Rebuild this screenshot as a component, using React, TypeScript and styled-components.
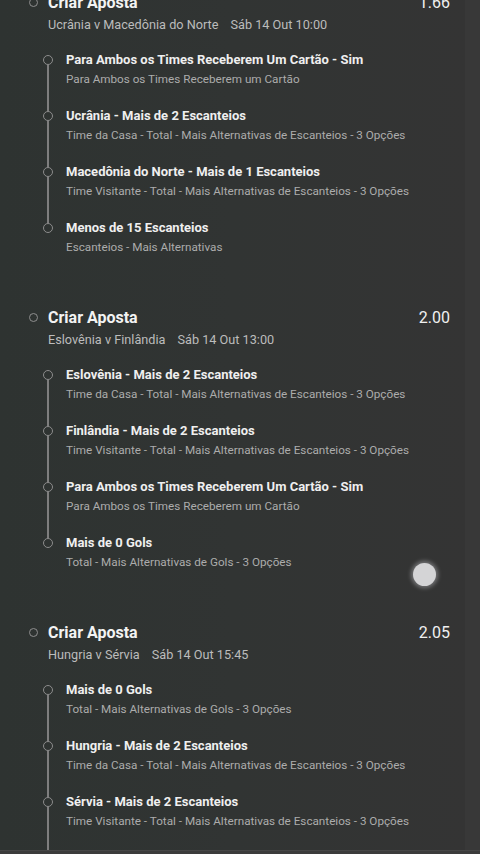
import styled, { createGlobalStyle } from 'styled-components';

const GlobalStyle = createGlobalStyle`
  html, body {
    margin: 0;
    padding: 0;
    background: #333534;
    font-family: Roboto, "Noto Sans", "Liberation Sans", sans-serif;
    overflow: hidden;
  }
`;

interface LegType {
    title: string,
    detail: string,
}

interface BetType {
    match: string,
    time: string,
    odds: string,
    legs: LegType[],
}

const bets: BetType[] = [
    {
        match: 'Ucrânia v Macedônia do Norte',
        time: 'Sáb 14 Out 10:00',
        odds: '1.66',
        legs: [
            { title: 'Para Ambos os Times Receberem Um Cartão - Sim', detail: 'Para Ambos os Times Receberem um Cartão' },
            { title: 'Ucrânia - Mais de 2 Escanteios', detail: 'Time da Casa - Total - Mais Alternativas de Escanteios - 3 Opções' },
            { title: 'Macedônia do Norte - Mais de 1 Escanteios', detail: 'Time Visitante - Total - Mais Alternativas de Escanteios - 3 Opções' },
            { title: 'Menos de 15 Escanteios', detail: 'Escanteios - Mais Alternativas' },
        ],
    },
    {
        match: 'Eslovênia v Finlândia',
        time: 'Sáb 14 Out 13:00',
        odds: '2.00',
        legs: [
            { title: 'Eslovênia - Mais de 2 Escanteios', detail: 'Time da Casa - Total - Mais Alternativas de Escanteios - 3 Opções' },
            { title: 'Finlândia - Mais de 2 Escanteios', detail: 'Time Visitante - Total - Mais Alternativas de Escanteios - 3 Opções' },
            { title: 'Para Ambos os Times Receberem Um Cartão - Sim', detail: 'Para Ambos os Times Receberem um Cartão' },
            { title: 'Mais de 0 Gols', detail: 'Total - Mais Alternativas de Gols - 3 Opções' },
        ],
    },
    {
        match: 'Hungria v Sérvia',
        time: 'Sáb 14 Out 15:45',
        odds: '2.05',
        legs: [
            { title: 'Mais de 0 Gols', detail: 'Total - Mais Alternativas de Gols - 3 Opções' },
            { title: 'Hungria - Mais de 2 Escanteios', detail: 'Time da Casa - Total - Mais Alternativas de Escanteios - 3 Opções' },
            { title: 'Sérvia - Mais de 2 Escanteios', detail: 'Time Visitante - Total - Mais Alternativas de Escanteios - 3 Opções' },
            { title: 'Para Ambos os Times Receberem Um Cartão - Sim', detail: 'Para Ambos os Times Receberem um Cartão' },
        ],
    },
];

const Screen = styled.div`
    position: relative;
    width: 480px;
    height: 854px;
    display: flex;
    flex-direction: column;
    overflow: hidden;
`;

const Body = styled.div`
    flex: 1;
    display: flex;
    overflow: hidden;
    border-bottom: 1px solid #464646;
`;

const Panel = styled.div`
    width: 465px;
    background: linear-gradient(90deg, #2e3331 0%, #313433 50%, #343434 100%);
    overflow: hidden;
`;

const SideStrip = styled.div`
    flex: 1;
    background: #383838;
`;

const Footer = styled.div`
    height: 3px;
    background: #3b3b3b;
`;

const List = styled.div`
    margin-top: -12px;
    display: flex;
    flex-direction: column;
`;

const Group = styled.section`
    padding: 3px 15px 28px 29px;
`;

const Header = styled.div`
    display: flex;
    align-items: center;
    height: 22px;
`;

const OuterDot = styled.span`
    width: 9px;
    height: 9px;
    box-sizing: border-box;
    border-radius: 50%;
    border: 1.3px solid #8e8e8e;
    margin-right: 10px;
    flex-shrink: 0;
`;

const Title = styled.div`
    flex: 1;
    color: #f3f3f3;
    font-size: 16px;
    font-weight: 700;
`;

const Odds = styled.div`
    color: #f0f0f0;
    font-size: 16px;
`;

const MatchLine = styled.div`
    display: flex;
    gap: 12px;
    margin: 4px 0 0 19px;
    color: #bcbcbc;
    font-size: 12.7px;
    line-height: 16px;
`;

const Legs = styled.div`
    margin: 18px 0 0 13px;
    display: flex;
    flex-direction: column;
`;

const Leg = styled.div`
    display: grid;
    grid-template-columns: 12px 1fr;
    column-gap: 12px;
`;

const Marker = styled.div`
    display: flex;
    flex-direction: column;
    align-items: center;
`;

const Segment = styled.span<{ $hidden?: boolean, $grow?: boolean }>`
    width: 1.6px;
    height: ${p => p.$grow ? 'auto' : '4px'};
    flex: ${p => p.$grow ? 1 : 'none'};
    background: ${p => p.$hidden ? 'transparent' : '#7e7e7e'};
`;

const LegDot = styled.span`
    width: 10px;
    height: 10px;
    box-sizing: border-box;
    border-radius: 50%;
    border: 1.4px solid #8c8c8c;
    flex-shrink: 0;
`;

const LegText = styled.div`
    padding-bottom: 20px;
`;

const LegTitle = styled.div`
    color: #efefef;
    font-size: 13px;
    font-weight: 700;
    line-height: 18px;
`;

const LegDetail = styled.div`
    margin-top: 2px;
    color: #acacac;
    font-size: 11.7px;
    line-height: 16px;
`;

const TouchDot = styled.div`
    position: absolute;
    left: 413px;
    top: 563px;
    width: 23px;
    height: 23px;
    border-radius: 50%;
    background: #d4d4d6;
    box-shadow: 0 0 4px 2px rgba(200, 200, 205, 0.45);
`;

const App = () => {
    return (
        <Screen>
            <GlobalStyle />
            <Body>
                <Panel>
                    <List>
                        {bets.map((bet, gi) => (
                            <Group key={bet.match}>
                                <Header>
                                    <OuterDot />
                                    <Title>Criar Aposta</Title>
                                    <Odds>{bet.odds}</Odds>
                                </Header>
                                <MatchLine>
                                    <span>{bet.match}</span>
                                    <span>{bet.time}</span>
                                </MatchLine>
                                <Legs>
                                    {bet.legs.map((leg, li) => {
                                        const last = li === bet.legs.length - 1 && gi !== bets.length - 1;
                                        return (
                                            <Leg key={li}>
                                                <Marker>
                                                    <Segment $hidden={li === 0} />
                                                    <LegDot />
                                                    <Segment $grow $hidden={last} />
                                                </Marker>
                                                <LegText>
                                                    <LegTitle>{leg.title}</LegTitle>
                                                    <LegDetail>{leg.detail}</LegDetail>
                                                </LegText>
                                            </Leg>
                                        );
                                    })}
                                </Legs>
                            </Group>
                        ))}
                    </List>
                </Panel>
                <SideStrip />
            </Body>
            <Footer />
            <TouchDot />
        </Screen>
    );
};

export default App;
